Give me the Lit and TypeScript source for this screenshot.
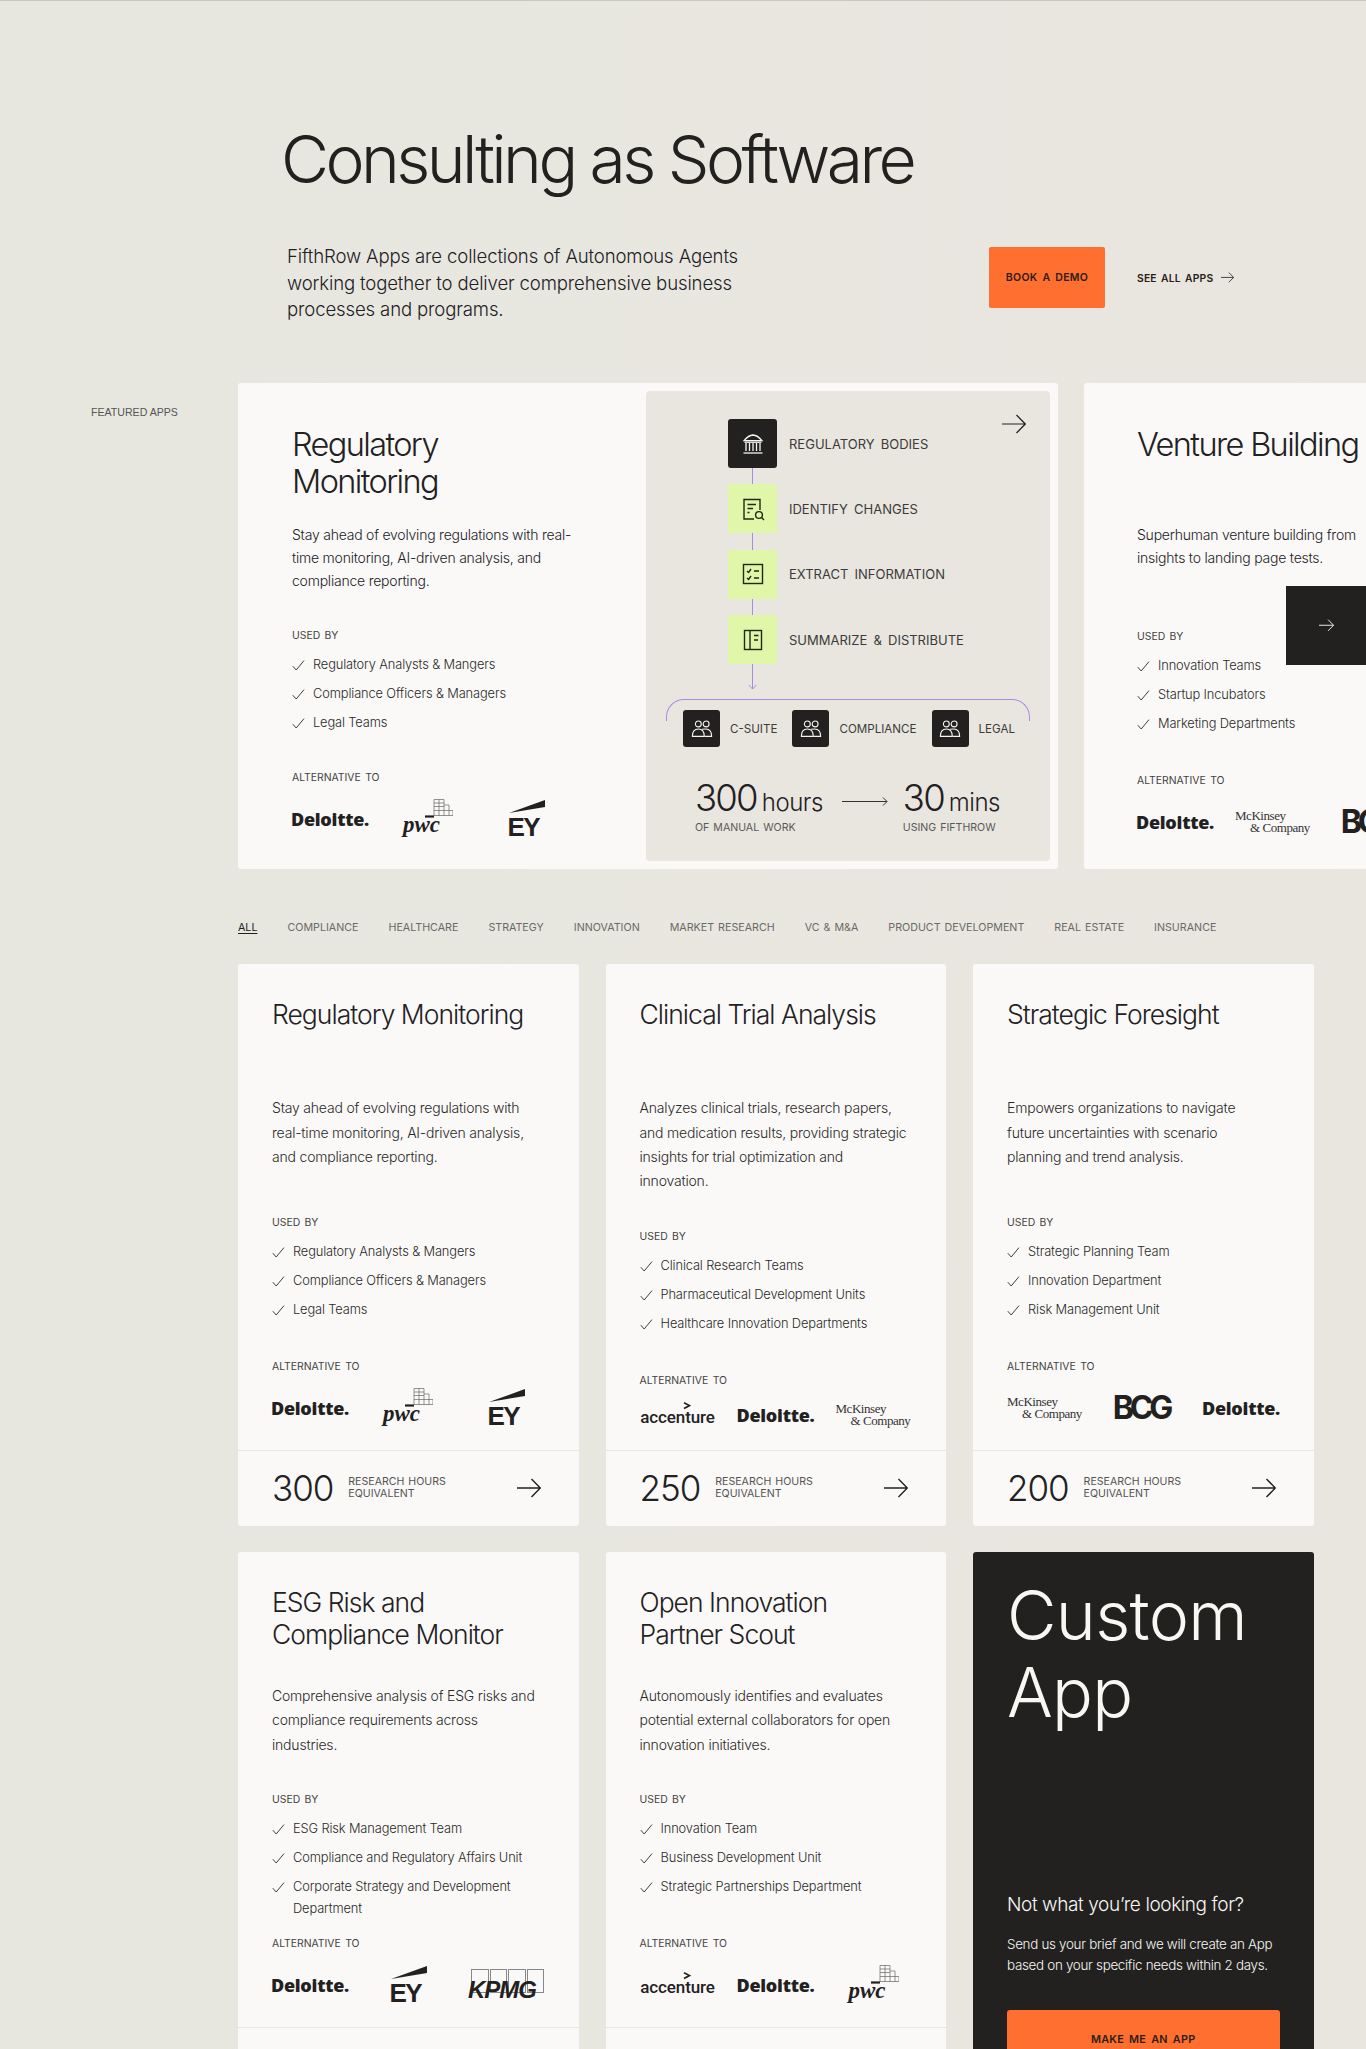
import { LitElement, html, css, svg, TemplateResult } from "lit";
import { customElement } from "lit/decorators.js";

type LogoName = "deloitte" | "pwc" | "ey" | "mck" | "bcg" | "acc" | "kpmg";
interface App {
  title: string;
  desc: string;
  used: string[];
  logos: LogoName[];
  hours: string;
}

const APPS: App[] = [
  {
    title: "Regulatory Monitoring",
    desc: "Stay ahead of evolving regulations with real-time monitoring, AI-driven analysis, and compliance reporting.",
    used: ["Regulatory Analysts & Mangers", "Compliance Officers & Managers", "Legal Teams"],
    logos: ["deloitte", "pwc", "ey"],
    hours: "300",
  },
  {
    title: "Clinical Trial Analysis",
    desc: "Analyzes clinical trials, research papers, and medication results, providing strategic insights for trial optimization and innovation.",
    used: ["Clinical Research Teams", "Pharmaceutical Development Units", "Healthcare Innovation Departments"],
    logos: ["acc", "deloitte", "mck"],
    hours: "250",
  },
  {
    title: "Strategic Foresight",
    desc: "Empowers organizations to navigate\nfuture uncertainties with scenario\nplanning and trend analysis.",
    used: ["Strategic Planning Team", "Innovation Department", "Risk Management Unit"],
    logos: ["mck", "bcg", "deloitte"],
    hours: "200",
  },
  {
    title: "ESG Risk and Compliance Monitor",
    desc: "Comprehensive analysis of ESG risks and compliance requirements across industries.",
    used: ["ESG Risk Management Team", "Compliance and Regulatory Affairs Unit", "Corporate Strategy and Development Department"],
    logos: ["deloitte", "ey", "kpmg"],
    hours: "300",
  },
  {
    title: "Open Innovation Partner Scout",
    desc: "Autonomously identifies and evaluates potential external collaborators for open innovation initiatives.",
    used: ["Innovation Team", "Business Development Unit", "Strategic Partnerships Department"],
    logos: ["acc", "deloitte", "pwc"],
    hours: "200",
  },
];

const TABS = ["All", "Compliance", "Healthcare", "Strategy", "Innovation", "Market Research", "VC & M&A", "Product Development", "Real Estate", "Insurance"];

const check = html`<svg class="check" viewBox="0 0 13 13" width="13" height="13" fill="none" stroke="#2a2927" stroke-width="0.9"><path d="M0.8 7.2 L4.2 11 L12 1.6"/></svg>`;

const arrow = (w: number, color = "#22211f", sw = 1.4) =>
  html`<svg viewBox="0 0 24 20" width=${w} height=${(w * 20) / 24} fill="none" stroke=${color} stroke-width=${sw}><path d="M0 10 H23 M14.5 1 L23.3 10 L14.5 19"/></svg>`;

const logoEl = (name: LogoName): TemplateResult => {
  switch (name) {
    case "deloitte":
      return html`<span class="lg-del">Deloitte.</span>`;
    case "pwc":
      return html`<span class="lg-pwc"
        ><svg viewBox="0 0 50 20" width="50" height="20" fill="none" stroke="#666" stroke-width="0.7">
          <path d="M31 0.5H41V16.5H31Z M31 4H41 M31 7.5H41 M36 0.5V16.5 M31 11.5H50V16.5H41 M41 6H46V16.5"/>
          <path d="M22 17.5H31" stroke="#1f1e1c" stroke-width="2.2"/> </svg
        ><b>pwc</b></span
      >`;
    case "ey":
      return html`<span class="lg-ey"
        ><svg viewBox="0 0 37 13" width="37" height="13"><path d="M1 13 L37 0 V7 Z" fill="#22211f"/></svg><b>EY</b></span
      >`;
    case "mck":
      return html`<span class="lg-mck"><span>McKinsey</span><span class="in">&amp; Company</span></span>`;
    case "bcg":
      return html`<span class="lg-bcg">BCG</span>`;
    case "acc":
      return html`<span class="lg-acc"
        ><svg viewBox="0 0 8 8" width="8" height="8" fill="none" stroke="#22211f" stroke-width="1.7"><path d="M1 0.8 L6.5 3.6 L1 6.6"/></svg>accenture</span
      >`;
    case "kpmg":
      return html`<span class="lg-kpmg"><i></i><i></i><i></i><i></i><b>KPMG</b></span>`;
  }
};

const logoRow = (logos: LogoName[]) => {
  const tall = logos.some((l) => ["pwc", "ey", "bcg", "kpmg"].includes(l));
  return html`<div class="logos ${tall ? "tall" : ""}">${logos.map((l) => html`<div class="lg">${logoEl(l)}</div>`)}</div>`;
};

const usedBlock = (used: string[]) => html`<div class="used">
  <div class="lbl">USED BY</div>
  <ul>
    ${used.map((u) => html`<li>${check}<span>${u}</span></li>`)}
  </ul>
</div>`;

const peopleIcon = html`<svg viewBox="0 0 24 24" width="22" height="22" fill="none" stroke="#f6f5f2" stroke-width="1.2"><circle cx="8" cy="6.5" r="3.2"/><circle cx="16.5" cy="6.5" r="3.2"/><path d="M1.5 20 C1.5 14.5 4 12 8 12 C12 12 14.5 14.5 14.5 20 Z"/><path d="M12 12.2 C13 12 14.5 12 16 12 C20 12 22.5 14.5 22.5 20 H15"/></svg>`;

const ICONS = {
  bank: html`<svg viewBox="0 0 24 24" width="24" height="24" fill="none" stroke="#f6f5f2" stroke-width="1.3"><path d="M3 8.6 C6 5 9 3.2 12 3 C15 3.2 18 5 21 8.6 Z"/><path d="M5 11V19M8.5 11V19M12 11V19M15.5 11V19M19 11V19"/><path d="M2.5 21H21.5"/><path d="M3.5 10.2H20.5" /></svg>`,
  doc: html`<svg viewBox="0 0 24 24" width="24" height="24" fill="none" stroke="#1f2a12" stroke-width="1.4"><path d="M19 13V2.5H3V22H13"/><path d="M6.5 7.5H15M6.5 11.5H12M6.5 15.5H8.5"/><circle cx="18" cy="18" r="3.4"/><path d="M20.5 20.5L23 23"/></svg>`,
  list: html`<svg viewBox="0 0 24 24" width="24" height="24" fill="none" stroke="#1f2a12" stroke-width="1.4"><rect x="2.5" y="2.5" width="19" height="19"/><path d="M6 9 L7.6 10.5 L10 7M6 16 L7.6 17.5 L10 14M13 9H18M13 16H18"/></svg>`,
  book: html`<svg viewBox="0 0 24 24" width="24" height="24" fill="none" stroke="#1f2a12" stroke-width="1.4"><rect x="3.5" y="2.5" width="17" height="19"/><path d="M9 2.5V21.5M13 7.5H17.5M13 12H17"/></svg>`,
};

const arrowLong = svg`<svg viewBox="0 0 46 11" width="46" height="11" fill="none" stroke="#33322f" stroke-width="1"><path d="M0 5.5H45M41 1.5L45 5.5L41 9.5"/></svg>`;

@customElement("app-root")
export class AppRoot extends LitElement {
  static styles = css`
    :host {
      display: block;
      height: 2049px;
      overflow: hidden;
      background: linear-gradient(90deg, #e7e7df, #e9e6e0);
      font-family: Inter, "Liberation Sans", sans-serif;
      color: #22211f;
      border-top: 1px solid #c8c8c0;
      box-sizing: border-box;
    }
    * {
      box-sizing: border-box;
    }
    ul {
      list-style: none;
      margin: 0;
      padding: 0;
    }
    h1,
    h2,
    h3,
    h4,
    p {
      margin: 0;
      font-weight: 400;
    }
    .hero {
      padding: 118px 0 0 281px;
    }
    h1 {
      font-size: 66px;
      font-weight: 300;
      line-height: 80px;
      letter-spacing: -0.054em;
      color: #22211f;
    }
    .hero-row {
      display: flex;
      align-items: flex-start;
      margin-top: 44px;
      padding-left: 6px;
    }
    .hero-row p {
      width: 480px;
      font-size: 18.6px;
      font-weight: 350;
      line-height: 26.7px;
      letter-spacing: -0.008em;
    }
    .btn {
      margin: 4px 0 0 222px;
      width: 116px;
      height: 61px;
      background: #ff6f2f;
      border-radius: 2px;
      display: flex;
      align-items: center;
      justify-content: center;
      font-size: 10.5px;
      word-spacing: 2px;
      letter-spacing: 0.3px;
    }
    .btn,
    .see {
      font-weight: 600;
      color: #2a2018;
    }
    .see {
      margin: 4px 0 0 32px;
      height: 61px;
      display: flex;
      align-items: center;
      gap: 8px;
      font-size: 10.3px;
      word-spacing: 1.5px;
      letter-spacing: 0.2px;
    }
    .featured {
      position: relative;
      display: flex;
      margin-top: 60px;
      padding-left: 91px;
    }
    .feat-label {
      width: 147px;
      flex: none;
      padding-top: 22px;
      font-size: 10.6px;
      line-height: 14px;
      color: #555;
      font-family: "Liberation Sans", sans-serif;
    }
    .track {
      display: flex;
      gap: 26px;
      flex: none;
    }
    .fcard {
      flex: none;
      background: #faf9f8;
      border-radius: 3px;
      height: 486px;
      display: flex;
    }
    .fcard.main {
      width: 820px;
      padding: 8px;
      justify-content: space-between;
    }
    .fcard.next {
      width: 400px;
    }
    .fbody {
      width: 300px;
      display: flex;
      flex-direction: column;
      margin-left: 46px;
      padding-top: 35px;
      height: 470px;
    }
    .fcard.main .fbody h2 {
      max-width: 200px;
    }
    .fcard.next .fbody {
      margin-left: 53px;
      padding-top: 43px;
      height: 486px;
      width: 320px;
    }
    .fcard.next .fbody p {
      max-width: 250px;
    }
    .fbody h2 {
      font-size: 32.5px;
      line-height: 37px;
      letter-spacing: -0.05em;
      font-weight: 300;
      min-height: 74px;
    }
    .fbody p {
      margin-top: 24px;
      font-size: 14px;
      line-height: 22.8px;
      letter-spacing: -0.016em;
      font-weight: 350;
      height: 81px;
    }
    .fbody .used {
      margin-top: 25px;
    }
    .used {
      height: 144px;
    }
    .lbl {
      font-size: 10.4px;
      word-spacing: 1.5px;
      line-height: 14px;
      color: #444341;
    }
    .used ul {
      margin-top: 11px;
      display: flex;
      flex-direction: column;
      gap: 7px;
    }
    .used li {
      display: flex;
      gap: 8px;
      font-size: 12.85px;
      line-height: 22px;
      font-weight: 350;
      letter-spacing: -0.01em;
      color: #2a2927;
    }
    .check {
      flex: none;
      margin-top: 5px;
    }
    .logos {
      margin-top: 14px;
      display: grid;
      grid-template-columns: 76px 76px 76px;
      gap: 22px;
      height: 26px;
      align-items: center;
    }
    .logos.tall {
      height: 40px;
    }
    .lg {
      display: flex;
      justify-content: center;
      align-items: center;
      white-space: nowrap;
      height: 100%;
      color: #22211f;
    }
    .lg-del {
      font-family: "Open Sans", sans-serif;
      font-weight: 800;
      font-size: 18px;
      letter-spacing: -0.25px;
      line-height: 22px;
    }
    .lg-pwc {
      display: block;
      position: relative;
      width: 50px;
      height: 40px;
    }
    .lg-pwc svg {
      position: absolute;
      right: 0;
      top: 0;
    }
    .lg-pwc b {
      position: absolute;
      left: 0;
      top: 14px;
      font-family: "Liberation Serif", serif;
      font-style: italic;
      font-weight: 700;
      font-size: 23px;
      line-height: 24px;
    }
    .lg-ey {
      display: flex;
      flex-direction: column;
      align-items: flex-start;
      width: 37px;
      height: 38px;
    }
    .lg-ey svg {
      display: block;
    }
    .lg-ey b {
      font-family: "Liberation Sans", sans-serif;
      font-size: 26px;
      line-height: 22px;
      letter-spacing: -1.5px;
      margin-top: 3px;
    }
    .lg-mck {
      font-family: "Liberation Serif", serif;
      font-size: 13px;
      line-height: 12px;
      letter-spacing: -0.45px;
      display: flex;
      flex-direction: column;
      width: 76px;
      color: #333;
    }
    .lg-mck .in {
      padding-left: 15px;
    }
    .lg-bcg {
      font-family: Inter, sans-serif;
      font-weight: 700;
      font-size: 32px;
      letter-spacing: -4.2px;
      line-height: 24px;
      padding-right: 4px;
    }
    .lg-acc {
      position: relative;
      font-family: Roboto, sans-serif;
      font-weight: 500;
      font-size: 17px;
      line-height: 20px;
      letter-spacing: -0.1px;
      padding-top: 5px;
    }
    .lg-acc svg {
      position: absolute;
      left: 43px;
      top: 0;
    }
    .lg-kpmg {
      position: relative;
      display: flex;
      width: 76px;
      height: 32px;
      gap: 1px;
      padding-left: 3px;
    }
    .lg-kpmg i {
      display: block;
      width: 17.5px;
      height: 24px;
      border: 1px solid #888;
    }
    .lg-kpmg b {
      position: absolute;
      left: 0;
      bottom: -1px;
      font-family: "Liberation Sans", sans-serif;
      font-style: italic;
      font-size: 24px;
      line-height: 24px;
      letter-spacing: -1px;
    }
    .alt {
      padding-bottom: 22px;
    }
    .panel {
      width: 404px;
      height: 470px;
      background: #e8e6df;
      border-radius: 4px;
      position: relative;
      padding: 28px 20px 0 20px;
      flex: none;
    }
    .panel-arrow {
      position: absolute;
      right: 24px;
      top: 23px;
      line-height: 0;
    }
    .steps {
      padding-left: 62px;
      display: flex;
      flex-direction: column;
      gap: 16.3px;
    }
    .step {
      display: flex;
      align-items: center;
      gap: 12px;
      font-size: 13px;
      word-spacing: 2.5px;
      line-height: 16px;
      color: #3c3b39;
    }
    .box {
      position: relative;
      flex: none;
      width: 49px;
      height: 49px;
      border-radius: 2px;
      background: #e0f6a9;
      display: flex;
      align-items: center;
      justify-content: center;
    }
    .box.dark {
      background: #22211f;
      border-radius: 3px;
    }
    .box.conn::after {
      content: "";
      position: absolute;
      left: 24px;
      top: 49px;
      width: 1px;
      height: 17px;
      background: #a98be3;
    }
    .drop {
      margin-left: 82px;
      height: 28px;
      line-height: 0;
    }
    .bracket {
      margin: 7px 0 0 0;
      height: 22px;
      width: 364px;
      border: 1px solid #a98be3;
      border-bottom: none;
      border-radius: 18px 18px 0 0;
    }
    .teams {
      display: flex;
      align-items: center;
      margin: -11px 0 0 17px;
      font-size: 11.6px;
      color: #3c3b39;
      white-space: nowrap;
    }
    .tbox {
      width: 37px;
      height: 37px;
      background: #22211f;
      border-radius: 3px;
      display: flex;
      align-items: center;
      justify-content: center;
      margin-right: 10px;
      flex: none;
    }
    .teams span {
      margin-right: 15px;
    }
    .metrics {
      display: flex;
      align-items: flex-start;
      margin: 31px 0 0 29px;
    }
    .metric b {
      font-weight: 300;
      font-size: 36.5px;
      line-height: 40px;
      letter-spacing: -0.05em;
    }
    .metric em {
      font-style: normal;
      font-weight: 300;
      font-size: 24px;
      letter-spacing: -0.02em;
      margin-left: 5px;
    }
    .metric div {
      display: flex;
      align-items: baseline;
    }
    .metric small {
      display: block;
      margin-top: 3px;
      font-size: 10.6px;
      word-spacing: 1px;
      line-height: 14px;
      color: #5a5957;
      white-space: nowrap;
    }
    .metric-arrow {
      width: 46px;
      height: 11px;
      margin: 18px 15px 0 19px;
      line-height: 0;
    }
    .float {
      position: absolute;
      right: 0;
      top: 203px;
      width: 80px;
      height: 79px;
      background: #22211f;
      display: flex;
      align-items: center;
      justify-content: center;
    }
    .tabs {
      display: flex;
      gap: 30px;
      margin: 51px 0 0 238px;
      font-size: 10.7px;
      word-spacing: 1px;
      line-height: 16px;
      color: #6a6966;
      white-space: nowrap;
    }
    .tabs .on {
      color: #22211f;
      text-decoration: underline;
      text-underline-offset: 2px;
    }
    .grid {
      display: grid;
      grid-template-columns: repeat(3, 340.5px);
      gap: 26px 27px;
      margin: 28px 0 0 238px;
    }
    .card {
      background: #faf9f8;
      border-radius: 3px;
      display: flex;
      flex-direction: column;
    }
    .cbody {
      flex: 1;
      display: flex;
      flex-direction: column;
      padding: 34px 34px 0;
    }
    .cbody h3 {
      font-size: 26.5px;
      font-weight: 300;
      line-height: 32px;
      letter-spacing: -0.037em;
      min-height: 64px;
    }
    .cbody p {
      margin-top: 34px;
      margin-bottom: 36px;
      font-size: 14px;
      line-height: 24.4px;
      font-weight: 350;
      letter-spacing: -0.014em;
      color: #2a2927;
      white-space: pre-line;
    }
    .cbody .used {
      margin-top: auto;
    }
    .foot {
      height: 76px;
      border-top: 1px solid #e8e6e2;
      display: flex;
      align-items: center;
      padding: 0 34px;
    }
    .foot b {
      font-weight: 300;
      font-size: 35px;
      letter-spacing: -0.03em;
      margin-right: 15px;
      line-height: 40px;
    }
    .foot small {
      font-size: 10.6px;
      word-spacing: 1px;
      line-height: 12.3px;
      color: #555452;
      flex: 1;
    }
    .foot svg {
      margin-right: 4px;
    }
    .dark-card {
      background: #22211f;
      color: #f8f7f4;
      border-radius: 3px;
      padding: 25px 34px 0;
      display: flex;
      flex-direction: column;
    }
    .dark-card h3 {
      font-size: 68px;
      font-weight: 300;
      line-height: 77px;
      letter-spacing: -0.01em;
    }
    .dark-card h4 {
      margin: 160px 0 0;
      font-size: 19px;
      letter-spacing: -0.4px;
      font-weight: 300;
      line-height: 28px;
    }
    .dark-card p {
      margin-top: 15px;
      font-size: 13.4px;
      letter-spacing: -0.3px;
      line-height: 21.6px;
      font-weight: 300;
    }
    .make {
      margin-top: 33px;
      height: 60px;
      border-radius: 3px;
      background: #ff6f2f;
      display: flex;
      align-items: center;
      justify-content: center;
      color: #2a2018;
      font-weight: 600;
      font-size: 10.8px;
      word-spacing: 2px;
      letter-spacing: 0.3px;
    }
  `;

  render() {
    return html`
      <section class="hero">
        <h1>Consulting as Software</h1>
        <div class="hero-row">
          <p>FifthRow Apps are collections of Autonomous Agents working together to deliver comprehensive business processes and programs.</p>
          <div class="btn">BOOK A DEMO</div>
          <div class="see">SEE ALL APPS ${arrow(13, "#22211f", 1.5)}</div>
        </div>
      </section>

      <section class="featured">
        <div class="feat-label">FEATURED APPS</div>
        <div class="track">
          <article class="fcard main">
            <div class="fbody">
              <h2>Regulatory Monitoring</h2>
              <p>Stay ahead of evolving regulations with real-time monitoring, AI-driven analysis, and compliance reporting.</p>
              ${usedBlock(["Regulatory Analysts & Mangers", "Compliance Officers & Managers", "Legal Teams"])}
              <div class="alt"><div class="lbl">ALTERNATIVE TO</div>${logoRow(["deloitte", "pwc", "ey"])}</div>
            </div>
            <div class="panel">
              <div class="panel-arrow">${arrow(24, "#22211f", 1.2)}</div>
              <div class="steps">
                <div class="step"><div class="box dark conn">${ICONS.bank}</div>REGULATORY BODIES</div>
                <div class="step"><div class="box conn">${ICONS.doc}</div>IDENTIFY CHANGES</div>
                <div class="step"><div class="box conn">${ICONS.list}</div>EXTRACT INFORMATION</div>
                <div class="step"><div class="box">${ICONS.book}</div>SUMMARIZE &amp; DISTRIBUTE</div>
              </div>
              <div class="drop">
                <svg width="9" height="26" viewBox="0 0 9 26" fill="none" stroke="#a98be3" stroke-width="1"><path d="M4.5 0V25M0.8 21L4.5 25L8.2 21"/></svg>
              </div>
              <div class="bracket"></div>
              <div class="teams">
                <div class="tbox">${peopleIcon}</div><span>C-SUITE</span>
                <div class="tbox">${peopleIcon}</div><span>COMPLIANCE</span>
                <div class="tbox">${peopleIcon}</div><span>LEGAL</span>
              </div>
              <div class="metrics">
                <div class="metric"><div><b>300</b><em>hours</em></div><small>OF MANUAL WORK</small></div>
                <div class="metric-arrow">${arrowLong}</div>
                <div class="metric"><div><b>30</b><em>mins</em></div><small>USING FIFTHROW</small></div>
              </div>
            </div>
          </article>
          <article class="fcard next">
            <div class="fbody">
              <h2>Venture Building</h2>
              <p>Superhuman venture building from insights to landing page tests.</p>
              ${usedBlock(["Innovation Teams", "Startup Incubators", "Marketing Departments"])}
              <div class="alt"><div class="lbl">ALTERNATIVE TO</div>${logoRow(["deloitte", "mck", "bcg"])}</div>
            </div>
          </article>
        </div>
        <div class="float">${arrow(15, "#f6f5f2", 1.5)}</div>
      </section>

      <nav class="tabs">
        ${TABS.map((t, i) => html`<span class=${i === 0 ? "on" : ""}>${t.toUpperCase()}</span>`)}
      </nav>

      <section class="grid">
        ${APPS.map(
          (a) => html`<article class="card">
            <div class="cbody">
              <h3>${a.title}</h3>
              <p>${a.desc}</p>
              ${usedBlock(a.used)}
              <div class="alt"><div class="lbl">ALTERNATIVE TO</div>${logoRow(a.logos)}</div>
            </div>
            <div class="foot">
              <b>${a.hours}</b>
              <small>RESEARCH HOURS<br />EQUIVALENT</small>
              ${arrow(24, "#22211f", 1.4)}
            </div>
          </article>`
        )}
        <article class="dark-card">
          <h3>Custom App</h3>
          <h4>Not what you’re looking for?</h4>
          <p>Send us your brief and we will create an App based on your specific needs within 2 days.</p>
          <div class="make">MAKE ME AN APP</div>
        </article>
      </section>
    `;
  }
}
